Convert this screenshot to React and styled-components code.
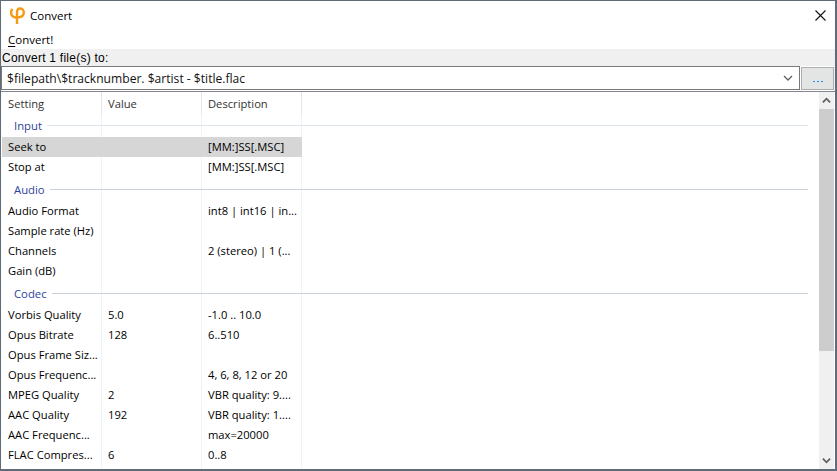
import React from 'react';
import styled, { createGlobalStyle } from 'styled-components';

const GlobalStyle = createGlobalStyle`
  html, body {
    margin: 0;
    padding: 0;
    background: #fff;
  }
  * {
    box-sizing: border-box;
  }
`;

const Window = styled.div`
  display: flex;
  flex-direction: column;
  width: 837px;
  height: 471px;
  overflow: hidden;
  background: #fff;
  border: 1px solid #5f6b78;
  border-width: 1px 2px 2px 1px;
  font-family: "Open Sans", "Noto Sans", sans-serif;
  font-size: 11.2px;
  color: #000;
`;

const TitleBar = styled.div`
  display: flex;
  align-items: center;
  height: 29px;
  padding: 0 9px 0 8px;
  font-size: 11.5px;
`;

const AppIcon = styled.svg`
  width: 16px;
  height: 18px;
  margin-right: 5px;
`;

const TitleText = styled.span`
  flex: 1;
`;

const MenuBar = styled.div`
  height: 19px;
  padding: 1px 0 0 7px;
  font-size: 11.5px;
  line-height: 18px;

  u {
    text-underline-offset: 2px;
  }
`;

const PathPanel = styled.div`
  display: flex;
  flex-direction: column;
  background: #f0f0f0;
  padding-right: 1px;
`;

const PathLabel = styled.div`
  height: 17px;
  padding-left: 1px;
  font-family: "Liberation Sans", sans-serif;
  font-size: 12px;
  line-height: 19px;
  letter-spacing: 0.25px;
`;

const PathRow = styled.div`
  display: flex;
  gap: 1px;
  height: 25px;
  background: #fff;
`;

const Combo = styled.div`
  display: flex;
  align-items: center;
  justify-content: space-between;
  width: 800px;
  height: 24px;
  padding: 0 6px 0 5px;
  background: #fff;
  border: 1px solid #7a7a7a;
  font-size: 12.1px;
  color: #606060;

  span {
    color: #111;
  }
`;

const BrowseButton = styled.div`
  display: flex;
  align-items: flex-end;
  justify-content: center;
  gap: 2px;
  width: 33px;
  height: 23px;
  margin-top: 1px;
  padding-bottom: 7px;
  background: #e3e5e4;
  border: 1px solid #adadad;
`;

const BrowseDot = styled.i`
  width: 2px;
  height: 1px;
  background: #1e8cf0;
`;

const ListFrame = styled.div`
  display: flex;
  flex: 1;
  min-height: 0;
  border-top: 1px solid #828790;
  padding-right: 1px;
`;

const TableArea = styled.div`
  flex: 1;
  min-width: 0;
  overflow: hidden;
  padding: 0 11px 0 1px;
`;

const Grid = styled.div`
  display: grid;
  grid-template-columns: 100px 100px 100px 1fr;
  align-content: start;
  height: 100%;
  background:
    linear-gradient(#eef3f8, #eef3f8) 99px 0 / 1px 100% no-repeat,
    linear-gradient(#eef3f8, #eef3f8) 199px 0 / 1px 100% no-repeat,
    linear-gradient(#eef3f8, #eef3f8) 299px 0 / 1px 100% no-repeat;
`;

const HeaderCell = styled.div`
  height: 23px;
  padding-left: 6px;
  border-right: ${p => (p.$last ? 'none' : '1px solid #e5e5e5')};
  line-height: 23px;
  color: #333;
`;

const Cell = styled.div`
  height: 20px;
  padding-left: 6px;
  background: ${p => (p.$selected ? '#d6d6d6' : 'transparent')};
  line-height: 20px;
  white-space: nowrap;
  overflow: hidden;
`;

const GroupRow = styled.div`
  grid-column: 1 / -1;
  display: flex;
  align-items: center;
  gap: 5px;
  height: ${p => p.$height}px;
  padding-left: 12px;
  padding-bottom: ${p => p.$lift || 0}px;
  color: #2f3f9c;
  font-size: 11.3px;

  &::after {
    content: '';
    flex: 1;
    height: 1px;
    background: ${p => p.$line || '#d5dfe5'};
  }
`;

const Scrollbar = styled.div`
  display: flex;
  flex-direction: column;
  width: 15px;
  background: #f0f0f0;
`;

const ScrollButton = styled.div`
  display: flex;
  align-items: center;
  justify-content: center;
  height: 17px;
  color: #606060;
`;

const ScrollTrack = styled.div`
  flex: 1;
  display: flex;
  flex-direction: column;
`;

const ScrollThumb = styled.div`
  height: 242px;
  background: #cdcdcd;
`;

const Chevron = ({ up, size = 9, stroke = 2 }) => (
  <svg width={size} height={size} viewBox="0 0 10 10" fill="none" stroke="currentColor" strokeWidth={stroke}>
    <path d={up ? 'M1 7l4-4 4 4' : 'M1 3l4 4 4-4'} />
  </svg>
);

const sections = [
  {
    name: 'Input',
    height: 22,
    lift: 2,
    line: '#dde5ea',
    rows: [
      ['Seek to', '', '[MM:]SS[.MSC]', true],
      ['Stop at', '', '[MM:]SS[.MSC]'],
    ],
  },
  {
    name: 'Audio',
    height: 24,
    line: '#c9d2dc',
    rows: [
      ['Audio Format', '', 'int8 | int16 | in...'],
      ['Sample rate (Hz)', '', ''],
      ['Channels', '', '2 (stereo) | 1 (...'],
      ['Gain (dB)', '', ''],
    ],
  },
  {
    name: 'Codec',
    height: 24,
    line: '#c9d2dc',
    rows: [
      ['Vorbis Quality', '5.0', '-1.0 .. 10.0'],
      ['Opus Bitrate', '128', '6..510'],
      ['Opus Frame Siz...', '', ''],
      ['Opus Frequenc...', '', '4, 6, 8, 12 or 20'],
      ['MPEG Quality', '2', 'VBR quality: 9....'],
      ['AAC Quality', '192', 'VBR quality: 1....'],
      ['AAC Frequenc...', '', 'max=20000'],
      ['FLAC Compres...', '6', '0..8'],
    ],
  },
];

export default function App() {
  return (
    <>
      <GlobalStyle />
      <Window>
        <TitleBar>
          <AppIcon viewBox="0 0 16 18" fill="none" stroke="#f59a11" strokeWidth="2.4">
            <path d="M3.500 2C1 5 1.500 10.500 8 10.500C12.500 10.500 14.800 8.500 14.800 5.500C14.800 3 13 1.500 11 1.500C9 1.500 8 3 8 6V17" />
          </AppIcon>
          <TitleText>Convert</TitleText>
          <svg width="11" height="11" viewBox="0 0 11 11" stroke="#111" strokeWidth="1.1">
            <path d="M.5.5l10 10M10.500.5l-10 10" />
          </svg>
        </TitleBar>
        <MenuBar><u>C</u>onvert!</MenuBar>
        <PathPanel>
          <PathLabel>Convert 1 file(s) to:</PathLabel>
          <PathRow>
            <Combo>
              <span>$filepath\$tracknumber. $artist - $title.flac</span>
              <Chevron size={10} stroke={1.3} />
            </Combo>
            <BrowseButton aria-label="...">
              <BrowseDot />
              <BrowseDot />
              <BrowseDot />
            </BrowseButton>
          </PathRow>
        </PathPanel>
        <ListFrame>
          <TableArea>
            <Grid>
              <HeaderCell>Setting</HeaderCell>
              <HeaderCell>Value</HeaderCell>
              <HeaderCell>Description</HeaderCell>
              <HeaderCell $last />
              {sections.map(section => (
                <React.Fragment key={section.name}>
                  <GroupRow $height={section.height} $lift={section.lift} $line={section.line}>{section.name}</GroupRow>
                  {section.rows.map(([setting, value, description, selected]) => (
                    <React.Fragment key={setting}>
                      <Cell $selected={selected}>{setting}</Cell>
                      <Cell $selected={selected}>{value}</Cell>
                      <Cell $selected={selected}>{description}</Cell>
                      <Cell />
                    </React.Fragment>
                  ))}
                </React.Fragment>
              ))}
            </Grid>
          </TableArea>
          <Scrollbar>
            <ScrollButton><Chevron up /></ScrollButton>
            <ScrollTrack><ScrollThumb /></ScrollTrack>
            <ScrollButton><Chevron /></ScrollButton>
          </Scrollbar>
        </ListFrame>
      </Window>
    </>
  );
}
